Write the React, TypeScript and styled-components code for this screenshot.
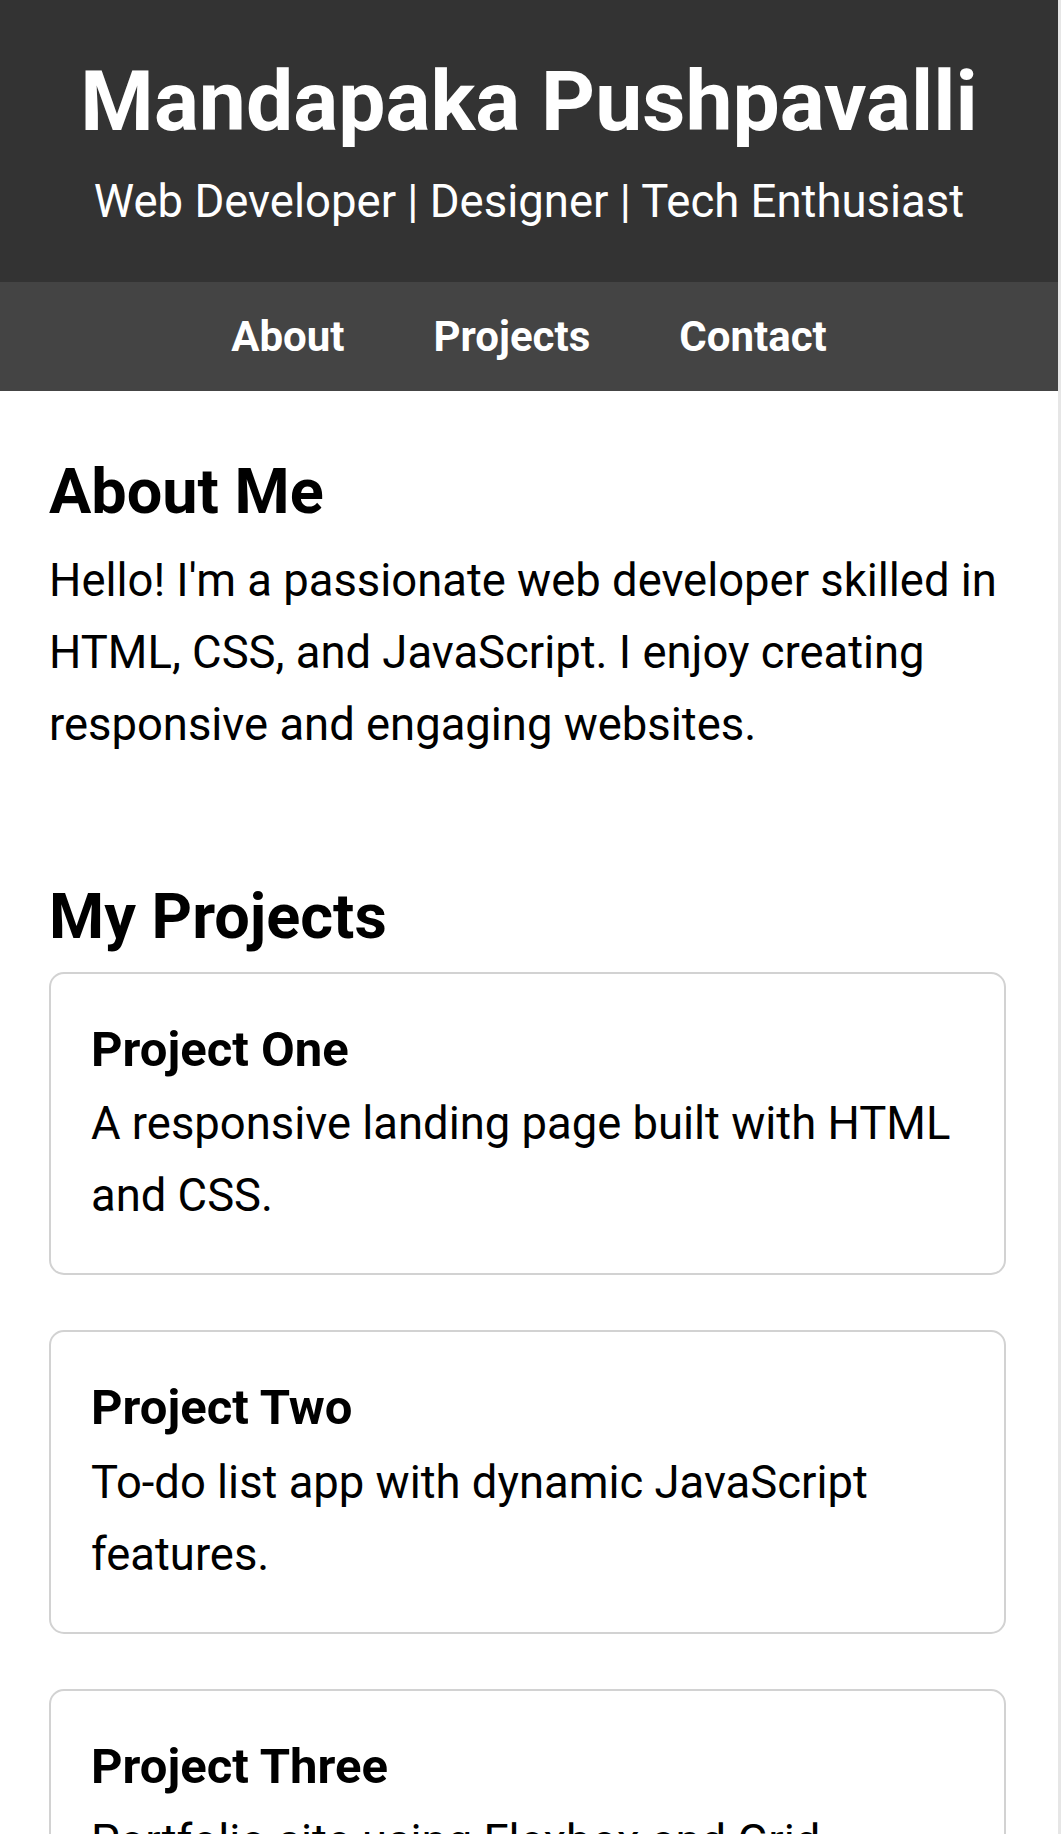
import React from "react";
import styled, { createGlobalStyle } from "styled-components";

const Global = createGlobalStyle`
  html, body { margin: 0; padding: 0; background: #fff; }
  body { font-family: Roboto, "Noto Sans", "Liberation Sans", sans-serif; color: #000; }
  * { box-sizing: border-box; }
`;

const Page = styled.div`
  width: 100%;
  border-right: 3px solid #e6e6e6;
`;

const Header = styled.header`
  background: #333;
  color: #fff;
  text-align: center;
  padding: 52px 20px 53px;
  display: flex;
  flex-direction: column;
  align-items: center;
  gap: 22px;
`;

const Title = styled.h1`
  margin: 0;
  font-size: 84px;
  font-weight: 700;
  line-height: 1.2;
`;

const Subtitle = styled.p`
  margin: 0;
  font-size: 45.5px;
  font-weight: 400;
  line-height: 1.2;
`;

const Nav = styled.nav`
  background: #444;
  height: 109px;
  display: flex;
  justify-content: center;
  align-items: center;
  gap: 89px;
`;

const NavLink = styled.a`
  color: #fff;
  font-size: 42px;
  font-weight: 700;
  text-decoration: none;
`;

const Main = styled.main`
  padding: 63px 52px 0 49px;
`;

const Section = styled.section<{ $gap?: number }>`
  margin-bottom: ${(p) => p.$gap ?? 0}px;
`;

const SectionTitle = styled.h2`
  margin: 0;
  font-size: 63px;
  font-weight: 700;
  line-height: 1.2;
`;

const Text = styled.p`
  margin: 0;
  font-size: 45.4px;
  line-height: 72px;
`;

const Intro = styled(Text)`
  margin-top: 15px;
`;

const CardList = styled.div`
  margin-top: 17px;
  display: flex;
  flex-direction: column;
  gap: 55px;
`;

const Card = styled.article`
  border: 2px solid #d2d2d2;
  border-radius: 15px;
  padding: 47px 40px 41px;
`;

const CardTitle = styled.h3`
  margin: 0 0 9px;
  font-size: 49px;
  font-weight: 700;
  line-height: 1.2;
`;

const projects = [
  { title: "Project One", text: "A responsive landing page built with HTML and CSS." },
  { title: "Project Two", text: "To-do list app with dynamic JavaScript features." },
  { title: "Project Three", text: "Portfolio site using Flexbox and Grid." },
];

export default function App() {
  return (
    <Page>
      <Global />
      <Header>
        <Title>Mandapaka Pushpavalli</Title>
        <Subtitle>Web Developer | Designer | Tech Enthusiast</Subtitle>
      </Header>
      <Nav>
        <NavLink href="#about">About</NavLink>
        <NavLink href="#projects">Projects</NavLink>
        <NavLink href="#contact">Contact</NavLink>
      </Nav>
      <Main>
        <Section id="about" $gap={118}>
          <SectionTitle>About Me</SectionTitle>
          <Intro>
            Hello! I'm a passionate web developer skilled in HTML, CSS, and JavaScript. I enjoy
            creating responsive and engaging websites.
          </Intro>
        </Section>
        <Section id="projects" $gap={60}>
          <SectionTitle>My Projects</SectionTitle>
          <CardList>
            {projects.map((p) => (
              <Card key={p.title}>
                <CardTitle>{p.title}</CardTitle>
                <Text>{p.text}</Text>
              </Card>
            ))}
          </CardList>
        </Section>
      </Main>
    </Page>
  );
}
